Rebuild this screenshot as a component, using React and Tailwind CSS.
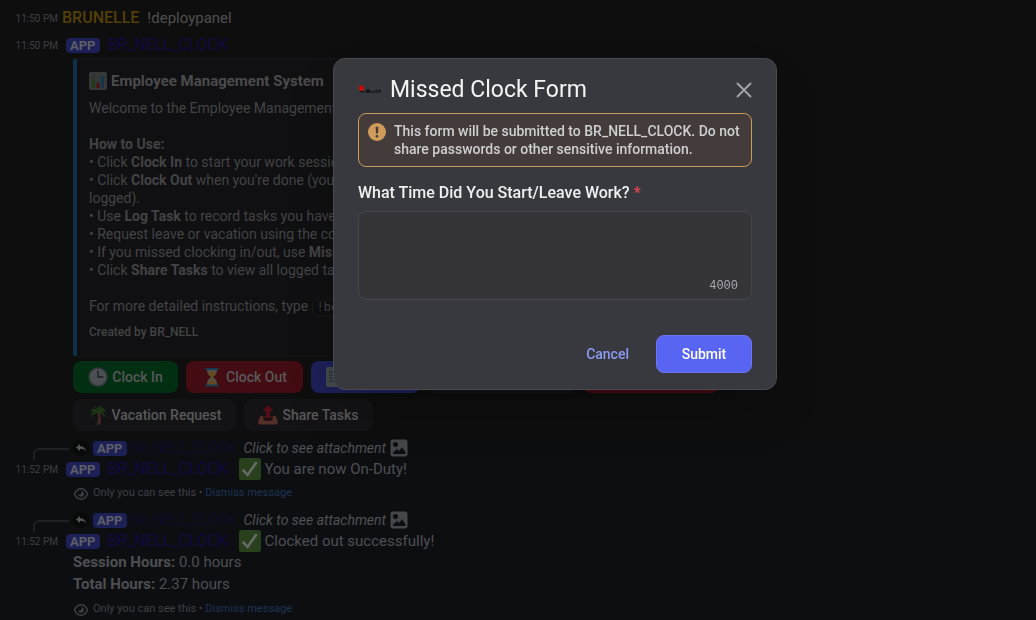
import React from "react";

function ChartEmoji() {
  return (
    <svg viewBox="0 0 18 18" className="size-[18px] shrink-0" aria-hidden="true">
      <rect width="18" height="18" rx="2" fill="#363839" />
      <path d="M0 5h18M0 10h18M5 0v18M10 0v18" stroke="#313435" strokeWidth="1" />
      <rect x="3" y="7" width="3" height="9" fill="#203c14" />
      <rect x="7.500" y="11" width="3" height="5" fill="#4d0d16" />
      <rect x="12" y="4" width="3" height="12" fill="#153449" />
    </svg>
  );
}

function ClockEmoji() {
  return (
    <svg viewBox="0 0 20 20" className="size-5 shrink-0" aria-hidden="true">
      <circle cx="10" cy="10" r="9" fill="#4b4f51" stroke="#33383b" strokeWidth="1.500" />
      <path d="M10 4v6h5" fill="none" stroke="#1c2023" strokeWidth="1.300" strokeLinecap="round" />
    </svg>
  );
}

function HourglassEmoji() {
  return (
    <svg viewBox="0 0 20 20" className="size-5 shrink-0" aria-hidden="true">
      <path d="M5 2h10c0 4-1 6-4 8 3 2 4 4 4 8H5c0-4 1-6 4-8-3-2-4-4-4-8z" fill="#545045" />
      <path d="M6.500 5h7c-.5 2-1.500 3.500-3 4.500V14c2 .5 3 2 3.500 3.500H6c.5-1.500 1.500-3 3.500-3.500V9.500C8 8.500 7 7 6.500 5z" fill="#68481a" />
      <path d="M3.500 1h13v2h-13zM3.500 17.500h13v2h-13z" fill="#173a51" />
    </svg>
  );
}

function NoteEmoji() {
  return (
    <svg viewBox="0 0 20 20" className="size-5 shrink-0" aria-hidden="true">
      <rect x="1" width="17" height="20" rx="2" fill="#44494d" />
      <path d="M4 5h10M4 8h10M4 11h10M4 14h7" stroke="#25292c" />
    </svg>
  );
}

function PalmEmoji() {
  return (
    <svg viewBox="0 0 20 20" className="size-5 shrink-0" aria-hidden="true">
      <path d="M9 6c2 4 2 9-.5 13.500h4C13 15 12.500 9 11 5z" fill="#50302a" />
      <path d="M9 9h2.500M9.500 12h3M9.500 15h3M9 18h3" stroke="#301d1a" />
      <path d="M10 6C8 3 4 3 2 7c2-1 3-1 4-.5-2 1-3 3-3 6 2-3 4-4 7-5 3 0 5 2 7 5 0-3-1-5-3-6 2-.5 3 0 4 .5-1-4-4-5-6-3l2-3c-3-1-4 1-4 3-1-3-4-3-6-2 3 0 5 2 6 4z" fill="#1b3515" />
    </svg>
  );
}

function OutboxEmoji() {
  return (
    <svg viewBox="0 0 20 20" className="size-5 shrink-0" aria-hidden="true">
      <path d="M2.500 11h15l2 4v3.500a1 1 0 0 1-1 1h-17a1 1 0 0 1-1-1V15z" fill="#552f29" />
      <path d="M5 11.500h10c0 4-2 4.500-5 4.500s-5-.5-5-4.500z" fill="#1d1010" />
      <path d="M10 0l5.500 6H12v7H8V6H4.500z" fill="#560d17" />
    </svg>
  );
}

function CheckEmoji() {
  return (
    <svg viewBox="0 0 22 22" className="size-[22px] shrink-0" aria-hidden="true">
      <rect width="22" height="22" rx="2.500" fill="#28401c" />
      <path d="M4.500 12.500l4 4.500L17 5" fill="none" stroke="#686a68" strokeWidth="2.600" strokeLinecap="round" strokeLinejoin="round" />
    </svg>
  );
}

function ImageIcon() {
  return (
    <svg viewBox="0 0 18 18" className="size-[18px] shrink-0" aria-hidden="true">
      <rect x=".5" y=".5" width="17" height="17" rx="2.500" fill="#45464a" />
      <circle cx="5.500" cy="5.500" r="2.500" fill="#0d0e12" />
      <path d="M3 15v-1.500l4-3.500 2 2 3-3.500 3.500 4.500V15z" fill="#0d0e12" />
    </svg>
  );
}

function ReplyIcon() {
  return (
    <span className="flex size-4 shrink-0 items-center justify-center rounded-full bg-[#090909]">
      <svg viewBox="0 0 12 12" className="size-3" aria-hidden="true">
        <path d="M5 2v2.200c3.500 0 5.500 2 6 5.300-1.300-2-3-2.700-6-2.700V9L1 5.500z" fill="#55565a" />
      </svg>
    </span>
  );
}

function EyeIcon() {
  return (
    <svg viewBox="0 0 16 16" className="size-4 shrink-0" fill="none" aria-hidden="true">
      <path d="M1.500 8C3 4.500 5.200 2.800 8 2.800S13 4.500 14.500 8C13 11.500 10.800 13.200 8 13.200S3 11.500 1.500 8z" stroke="#3f4044" strokeWidth="1.500" />
      <path d="M8 5.200A2.800 2.800 0 1 1 5.200 8 1.600 1.600 0 0 0 8 5.200z" fill="#3f4044" />
    </svg>
  );
}

function AppTag() {
  return (
    <span className="flex h-[15px] shrink-0 items-center rounded bg-[#1d2057] px-1 text-[13px] leading-none font-bold text-[#5d5e66]">
      APP
    </span>
  );
}

function Time({ children }) {
  return <time className="w-[43px] shrink-0 text-right text-[10px] whitespace-nowrap text-[#3f3f41]">{children}</time>;
}

function BotName() {
  return (
    <a href="#bot" className="w-[124px] shrink-0 text-base font-light whitespace-nowrap text-[#15045a]">
      BR_NELL_CLOCK
    </a>
  );
}

function PanelButton({ icon, tone, width, children }) {
  return (
    <button
      type="button"
      className={`flex h-8 shrink-0 items-center justify-center gap-1 rounded-lg text-sm font-medium whitespace-nowrap text-[#58585a] ${tone} ${width}`}
    >
      {icon}
      {children}
    </button>
  );
}

function ReplyPreview() {
  return (
    <div className="flex h-[22px] items-center pl-[33px]">
      <span className="mt-3 h-3 w-9 shrink-0 rounded-tl-md border-t-2 border-l-2 border-[#1f2023]" />
      <span className="ml-1 flex items-center">
        <ReplyIcon />
        <span className="ml-1">
          <AppTag />
        </span>
        <a href="#bot" className="ml-1 w-[113px] text-sm font-light whitespace-nowrap text-[#120a33]">
          BR_NELL_CLOCK
        </a>
        <span className="mr-1 text-sm whitespace-nowrap text-[#505155] italic">Click to see attachment</span>
        <ImageIcon />
      </span>
    </div>
  );
}

function EphemeralMessage({ time, text, children }) {
  return (
    <article className="pb-2">
      <ReplyPreview />
      <div className="flex h-5 items-center pl-[15px]">
        <Time>{time}</Time>
        <span className="mr-2 ml-2">
          <AppTag />
        </span>
        <BotName />
        <span className="ml-[7px] flex items-center gap-1 text-[15px] whitespace-nowrap text-[#4e4f53]">
          <CheckEmoji />
          {text}
        </span>
      </div>
      {children}
      <p className="mt-1 flex h-[21px] items-center gap-1 pl-[73px] text-[11px] text-[#3f4044]">
        <EyeIcon />
        <span>
          Only you can see this •{" "}
          <a href="#dismiss" className="text-[#1d3353]">
            Dismiss message
          </a>
        </span>
      </p>
    </article>
  );
}

function Embed() {
  return (
    <section className="ml-[73px] max-w-[516px] rounded border border-l-4 border-[#151517] border-l-[#0e3048] bg-[#101013] px-3 pt-[11px] pb-4 text-sm leading-[18px] text-[#434345]">
      <h2 className="flex h-[22px] items-center gap-1 text-[15px] font-bold text-[#4b4b4d]">
        <ChartEmoji />
        Employee Management System
      </h2>
      <p className="mt-[7px]">Welcome to the Employee Management System!</p>
      <p className="mt-[18px]">
        <b>How to Use:</b>
      </p>
      <ul>
        <li>
          • Click <b>Clock In</b> to start your work session.
        </li>
        <li>
          • Click <b>Clock Out</b> when you're done (your hours will be
          <br />
          logged).
        </li>
        <li>
          • Use <b>Log Task</b> to record tasks you have completed.
        </li>
        <li>• Request leave or vacation using the correct buttons.</li>
        <li>
          • If you missed clocking in/out, use <b>Missed Clock</b>.
        </li>
        <li>
          • Click <b>Share Tasks</b> to view all logged tasks.
        </li>
      </ul>
      <p className="mt-[18px]">
        For more detailed instructions, type{" "}
        <code className="rounded border border-[#18181c] bg-[#0e0e11] px-1 font-['Liberation_Mono',monospace] text-xs">!bothelp</code>
      </p>
      <footer className="mt-2 text-xs leading-4 font-medium">Created by BR_NELL</footer>
    </section>
  );
}

function MissedClockDialog() {
  return (
    <div className="fixed inset-0 flex items-start justify-center pt-[58px] pl-[74px]">
      <form
        role="dialog"
        aria-labelledby="dialog-title"
        className="w-full max-w-[444px] rounded-xl border border-[#494a50] bg-[#38393e] px-6 pt-[15px] pb-4 shadow-2xl"
      >
        <header className="flex h-8 items-center">
          <svg viewBox="0 0 24 24" className="size-6 shrink-0" aria-hidden="true">
            <path d="M1 14.200h22" stroke="#26252d" strokeWidth="1" />
            <path d="M2 13.500h5M12 13.500h3" stroke="#16141c" strokeWidth="1" />
            <circle cx="10" cy="13" r="1.900" fill="#121018" />
            <path d="M16.500 12v2.500M18.500 11.500v3M20.500 12v2.500M22.300 11v3.500" stroke="#16141c" strokeWidth="1.100" />
            <circle cx="3.500" cy="10.200" r="2.600" fill="#cb0909" />
          </svg>
          <h1 id="dialog-title" className="ml-2 grow text-[23px] leading-8 text-[#f4f4f5]">
            Missed Clock Form
          </h1>
          <button type="button" aria-label="Close" className="flex size-4 items-center justify-center">
            <svg viewBox="0 0 16 16" className="size-4" aria-hidden="true">
              <path d="M1.500 1.500l13 13M14.500 1.500l-13 13" stroke="#a5a6ab" strokeWidth="1.800" strokeLinecap="round" />
            </svg>
          </button>
        </header>
        <p className="mt-[7px] flex h-[54px] items-start gap-2 rounded-lg border border-[#cd9a57] bg-[#433c3a] px-[9px] py-2 text-sm leading-[18px] font-medium text-[#cfcfd1]">
          <svg viewBox="0 0 18 18" className="mt-px size-[18px] shrink-0" aria-hidden="true">
            <circle cx="9" cy="9" r="9" fill="#d09c5b" />
            <path d="M7.600 3.800h2.800L10 10.500H8z" fill="#433c3a" />
            <circle cx="9" cy="13.300" r="1.300" fill="#433c3a" />
          </svg>
          <span>This form will be submitted to BR_NELL_CLOCK. Do not share passwords or other sensitive information.</span>
        </p>
        <label htmlFor="work-time" className="mt-4 block text-base leading-5 font-medium text-[#f0f0f1]">
          What Time Did You Start/Leave Work? <span className="text-[#e0464c]">*</span>
        </label>
        <div className="mt-2 grid">
          <textarea
            id="work-time"
            className="col-start-1 row-start-1 block h-[89px] w-full resize-none rounded-lg border border-[#46474d] bg-[#353439] p-3 text-base text-[#e0e0e2] outline-none"
          />
          <span className="pointer-events-none col-start-1 row-start-1 mr-3.5 mb-[7px] self-end justify-self-end font-['Liberation_Mono',monospace] text-xs leading-[14px] text-[#a9a9ae]">
            4000
          </span>
        </div>
        <div className="mt-[35px] flex items-center justify-end gap-[27px]">
          <button type="button" className="text-sm font-medium text-[#8b9bf3]">
            Cancel
          </button>
          <button
            type="submit"
            className="h-[38px] w-24 rounded-lg border border-[#6b75f4] bg-[#5865f2] text-sm font-medium text-white"
          >
            Submit
          </button>
        </div>
      </form>
    </div>
  );
}

export default function App() {
  return (
    <div className="min-h-screen overflow-hidden bg-[#0e0e0e] font-[Roboto,sans-serif]">
      <main className="pt-[7px]">
        <div className="flex h-[22px] items-center pl-[15px]">
          <Time>11:50 PM</Time>
          <span className="ml-1 text-base font-medium text-[#544006]">BRUNELLE</span>
          <span className="ml-2 text-[15px] text-[#4e4e50]">!deploypanel</span>
        </div>
        <div className="mt-[5px] flex h-[22px] items-center pl-[15px]">
          <Time>11:50 PM</Time>
          <span className="mr-2 ml-2">
            <AppTag />
          </span>
          <BotName />
        </div>
        <div className="mt-[2px]">
          <Embed />
        </div>
        <div className="mt-1 ml-[73px] flex flex-col gap-[6px]">
          <div className="flex gap-2">
            <PanelButton icon={<ClockEmoji />} tone="bg-[#022e12]" width="w-[105px]">
              Clock In
            </PanelButton>
            <PanelButton icon={<HourglassEmoji />} tone="bg-[#430c12]" width="w-[117px]">
              Clock Out
            </PanelButton>
            <PanelButton icon={<NoteEmoji />} tone="bg-[#1d2057]" width="w-[109px]">
              Log Task
            </PanelButton>
            <PanelButton icon={<PalmEmoji />} tone="bg-[#131316]" width="w-[147px]">
              Leave Request
            </PanelButton>
            <PanelButton icon={<ClockEmoji />} tone="bg-[#430c12]" width="w-[136px]">
              Missed Clock
            </PanelButton>
          </div>
          <div className="flex gap-2">
            <PanelButton icon={<PalmEmoji />} tone="bg-[#131316]" width="w-[163px]">
              Vacation Request
            </PanelButton>
            <PanelButton icon={<OutboxEmoji />} tone="bg-[#131316]" width="w-[129px]">
              Share Tasks
            </PanelButton>
          </div>
        </div>
        <div className="mt-[6px] bg-[#0d0e12]">
          <EphemeralMessage time="11:52 PM" text="You are now On-Duty!" />
          <div className="-mt-[3px]">
            <EphemeralMessage time="11:52 PM" text="Clocked out successfully!">
              <div className="pl-[73px] text-[15px] leading-[22px] text-[#4e4f53]">
                <p>
                  <b>Session Hours:</b> 0.0 hours
                </p>
                <p>
                  <b>Total Hours:</b> 2.37 hours
                </p>
              </div>
            </EphemeralMessage>
          </div>
        </div>
      </main>
      <MissedClockDialog />
    </div>
  );
}
